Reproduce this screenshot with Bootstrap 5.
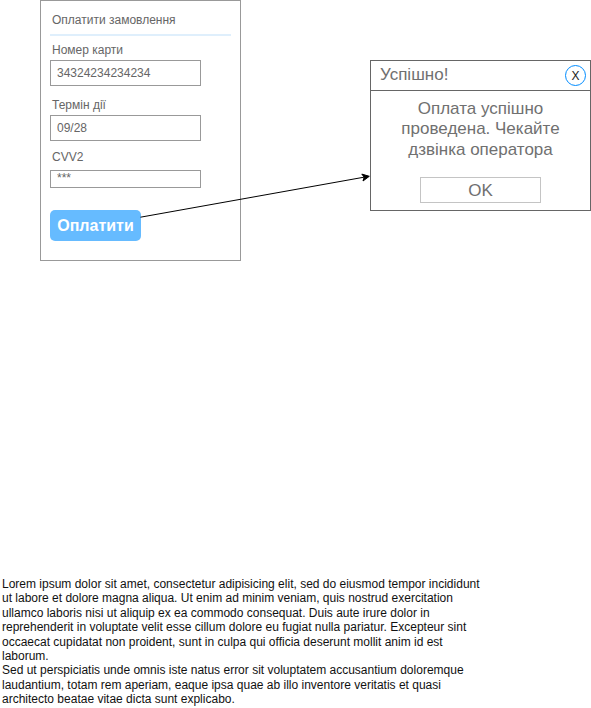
<!DOCTYPE html>
<html lang="uk">
<head>
<meta charset="utf-8">
<meta name="viewport" content="width=device-width, initial-scale=1">
<title>Оплатити замовлення</title>
<link href="https://cdn.jsdelivr.net/npm/bootstrap@5.3.0/dist/css/bootstrap.min.css" rel="stylesheet">
<style>
body { font-family: "Liberation Sans", Arial, sans-serif; font-size: 12px; line-height: 14px; color: #666; background: #fff; }
.board { width: 591px; height: 708px; }
.pay-form { width: 201px; height: 261px; margin-left: 40px; padding: 12px 9px 0; border: 1px solid #999; }
.pay-title { height: 23px; padding-left: 2px; border-bottom: 2px solid #dfeffc; }
.pay-label { margin: 12px 0 3px; padding-left: 2px; font-size: 12px; line-height: 14px; }
.pay-title + .pay-label { margin-top: 7px; }
.code-label { margin: 9px 0 6px; }
.pay-form .form-control { width: 151px; height: 26px; min-height: 0; padding: 0 6px; border: 1px solid #999; border-radius: 0; font-size: 12px; line-height: 14px; color: #666; }
.pay-form .code-input { height: 18px; padding-bottom: 2px; }
.btn-pay { width: 91px; height: 31px; margin-top: 22px; padding: 0; border: 0; border-radius: 5px; background: #66bbff; color: #fff; font-size: 16px; line-height: 31px; }
.notice { width: 221px; height: 151px; margin-top: 60px; border: 1px solid #666; font-size: 17px; line-height: 20.4px; color: #707070; }
.notice-head { height: 30px; padding: 0 4px 0 9px; border-bottom: 1px solid #666; }
.btn-x { width: 21px; height: 21px; padding: 0; border: 1px solid #008cff; color: #222; font-size: 12px; line-height: 18px; }
.notice-text { padding: 8px 20px 0; height: 86px; }
.btn-ok { width: 121px; height: 26px; padding: 0; border: 1px solid #c4c4c4; border-radius: 0; color: #707070; font-size: 17px; line-height: 25px; }
.note { width: 490px; margin: 0 0 0 2px; padding-bottom: 1.4px; color: #111; font-size: 12px; line-height: 14.4px; }
</style>
</head>
<body class="overflow-hidden">
<main class="board position-relative d-flex flex-column justify-content-between">
  <div class="d-flex align-items-start justify-content-between">
    <form class="pay-form">
      <div class="pay-title">Оплатити замовлення</div>
      <label class="pay-label d-block" for="num">Номер карти</label>
      <input class="form-control" id="num" value="34324234234234">
      <label class="pay-label d-block" for="exp">Термін дії</label>
      <input class="form-control" id="exp" value="09/28">
      <label class="pay-label code-label d-block" for="cvv">CVV2</label>
      <input class="form-control code-input" id="cvv" value="***">
      <button class="btn btn-pay fw-bold d-block" type="button">Оплатити</button>
    </form>
    <section class="notice">
      <div class="notice-head d-flex align-items-center justify-content-between">
        <span class="notice-title">Успішно!</span>
        <button class="btn btn-x rounded-circle" type="button">X</button>
      </div>
      <div class="notice-text text-center">Оплата успішно<br>проведена. Чекайте<br>дзвінка оператора</div>
      <button class="btn btn-ok d-block mx-auto" type="button">OK</button>
    </section>
  </div>
  <svg class="position-absolute top-0 start-0 pe-none" width="591" height="270" aria-hidden="true">
    <path d="M140.500 217.200L364 177.200" stroke="#000" fill="none"/>
    <path d="M369.300 176.300L363 181L364.200 177.200L361.800 174.100Z" stroke="#000"/>
  </svg>
  <p class="note">Lorem ipsum dolor sit amet, consectetur adipisicing elit, sed do eiusmod tempor incididunt<br>ut labore et dolore magna aliqua. Ut enim ad minim veniam, quis nostrud exercitation<br>ullamco laboris nisi ut aliquip ex ea commodo consequat. Duis aute irure dolor in<br>reprehenderit in voluptate velit esse cillum dolore eu fugiat nulla pariatur. Excepteur sint<br>occaecat cupidatat non proident, sunt in culpa qui officia deserunt mollit anim id est<br>laborum.<br>Sed ut perspiciatis unde omnis iste natus error sit voluptatem accusantium doloremque<br>laudantium, totam rem aperiam, eaque ipsa quae ab illo inventore veritatis et quasi<br>architecto beatae vitae dicta sunt explicabo.</p>
</main>
<script src="https://cdn.jsdelivr.net/npm/bootstrap@5.3.0/dist/js/bootstrap.bundle.min.js"></script>
</body>
</html>
